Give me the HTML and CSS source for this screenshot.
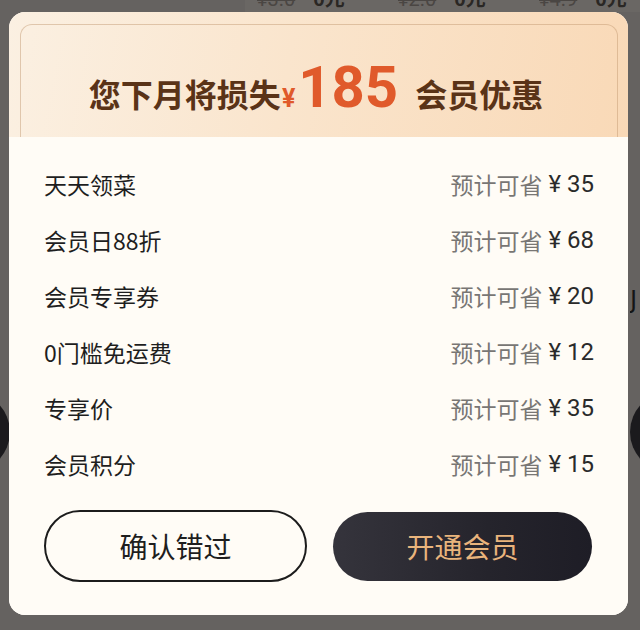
FILE: index.html
```html
<!DOCTYPE html>
<html lang="zh-CN">
<head>
<meta charset="utf-8">
<title>会员优惠</title>
<link rel="stylesheet" href="styles.css">
</head>
<body>
<div class="backdrop">
  <div class="bg-strip">
    <span class="bg-item"><s>¥3.0</s><b>0元</b></span>
    <span class="bg-item"><s>¥2.0</s><b>0元</b></span>
    <span class="bg-item"><s>¥4.9</s><b>0元</b></span>
  </div>
  <div class="bg-disc bg-disc-left"></div>
  <div class="bg-disc bg-disc-right"></div>
  <div class="bg-glyph">J</div>
</div>

<div class="modal">
  <div class="modal-head">
    <div class="head-frame">
      <h1 class="title">您下月将损失<span class="yen">¥</span><span class="amount">185</span><span class="tail">会员优惠</span></h1>
    </div>
  </div>
  <div class="modal-body">
    <ul class="perks">
      <li class="perk"><span class="perk-name">天天领菜</span><span class="perk-save">预计可省<span class="perk-val">¥ 35</span></span></li>
      <li class="perk"><span class="perk-name">会员日88折</span><span class="perk-save">预计可省<span class="perk-val">¥ 68</span></span></li>
      <li class="perk"><span class="perk-name">会员专享券</span><span class="perk-save">预计可省<span class="perk-val">¥ 20</span></span></li>
      <li class="perk"><span class="perk-name">0门槛免运费</span><span class="perk-save">预计可省<span class="perk-val">¥ 12</span></span></li>
      <li class="perk"><span class="perk-name">专享价</span><span class="perk-save">预计可省<span class="perk-val">¥ 35</span></span></li>
      <li class="perk"><span class="perk-name">会员积分</span><span class="perk-save">预计可省<span class="perk-val">¥ 15</span></span></li>
    </ul>
    <div class="actions">
      <button class="btn btn-ghost">确认错过</button>
      <button class="btn btn-dark">开通会员</button>
    </div>
  </div>
</div>
</body>
</html>
```
FILE: styles.css
```css
* { box-sizing: border-box; }
html, body {
  margin: 0;
  padding: 0;
  width: 640px;
  height: 630px;
  overflow: hidden;
}
body {
  background: #656260;
  font-family: "Noto Sans CJK SC", "Noto Sans", sans-serif;
  position: relative;
  padding-top: 12px;
  padding-left: 9px;
}

/* dimmed page behind the dialog */
.backdrop {
  position: absolute;
  inset: 0;
  z-index: 0;
}
.bg-strip {
  position: absolute;
  left: 245px;
  top: -12px;
  right: 0;
  height: 24px;
  background: #6a6764;
  display: flex;
  gap: 40px;
  padding-left: 12px;
  font-family: "Roboto", "Noto Sans CJK SC", sans-serif;
  font-size: 20px;
  line-height: 22px;
  color: #2a2724;
}
.bg-item { display: flex; gap: 18px; width: 110px; }
.bg-item s { color: #4a4643; }
.bg-item b { font-weight: 700; }
.bg-disc {
  position: absolute;
  width: 80px;
  height: 80px;
  border-radius: 50%;
  background: #1b1a1d;
  top: 392px;
}
.bg-disc-left { left: -70px; }
.bg-disc-right { right: -70px; }
.bg-glyph {
  position: absolute;
  right: 0;
  top: 280px;
  width: 10px;
  overflow: hidden;
  font-size: 26px;
  color: #151515;
  font-family: "Noto Sans", sans-serif;
}

/* dialog */
.modal {
  position: relative;
  z-index: 1;
  width: 619px;
  height: 603px;
  border-radius: 16px;
  overflow: hidden;
  background: #fffcf6;
  display: flex;
  flex-direction: column;
}
.modal-head {
  height: 125px;
  padding: 12px 10px 0 11px;
  background: linear-gradient(100deg, #fbf0e2 0%, #fae5cd 45%, #f9d9b7 100%);
}
.head-frame {
  height: 113px;
  border: 1px solid rgba(190, 150, 110, 0.45);
  border-bottom: none;
  border-radius: 12px 12px 0 0;
  display: flex;
  justify-content: center;
  padding-top: 38px;
}
.title {
  margin: 0;
  display: flex;
  align-items: baseline;
  font-size: 32px;
  font-weight: 700;
  color: #5a3317;
  line-height: 48px;
  letter-spacing: 0;
  padding-right: 6px;
}
.yen {
  color: #e05a2b;
  font-family: "Roboto", sans-serif;
  font-size: 25px;
  font-weight: 700;
  margin: 0 3px 0 1px;
}
.amount {
  color: #e05a2b;
  font-family: "Roboto", sans-serif;
  font-size: 58px;
  font-weight: 700;
  letter-spacing: 0;
}
.tail { margin-left: 17px; }

.modal-body {
  flex: 1;
  padding: 19px 34px 0 35px;
  background: #fffcf6;
}
.perks {
  list-style: none;
  margin: 0;
  padding: 0;
}
.perk {
  height: 56px;
  display: flex;
  justify-content: space-between;
  align-items: center;
  font-size: 23px;
}
.perk-name { color: #1e1e1e; }
.perk-save { color: #787674; display: flex; align-items: center; }
.perk-val {
  color: #2a2a2a;
  font-family: "Roboto", "Noto Sans CJK SC", sans-serif;
  margin-left: 6px;
  font-size: 24px;
}

.actions {
  display: flex;
  gap: 26px;
  margin-top: 18px;
  align-items: center;
  padding-right: 2px;
}
.btn {
  flex: 1;
  font-family: "Noto Sans CJK SC", sans-serif;
  font-size: 28px;
  border-radius: 36px;
  cursor: pointer;
  display: flex;
  align-items: center;
  justify-content: center;
}
.btn-ghost {
  height: 72px;
  background: transparent;
  border: 2px solid #1c1c1c;
  color: #1e1e1e;
}
.btn-dark {
  height: 69px;
  border: none;
  background: linear-gradient(90deg, #35343c 0%, #25242c 60%, #1e1d26 100%);
  color: #e9b47c;
}
```
